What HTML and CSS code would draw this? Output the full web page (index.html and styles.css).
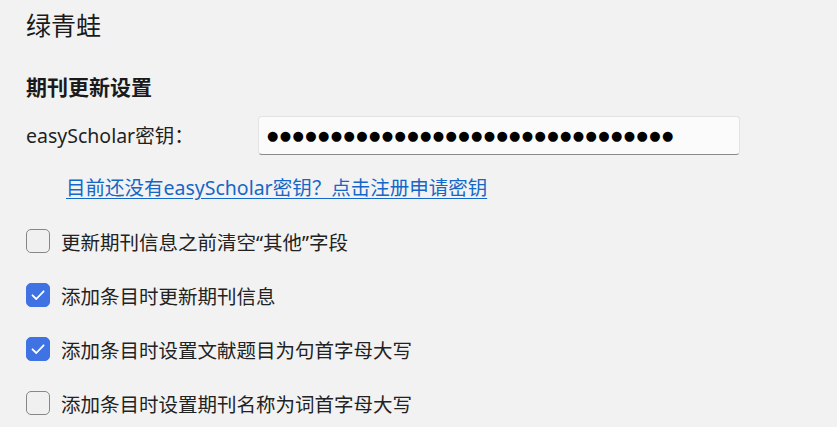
FILE: index.html
```html
<!DOCTYPE html>
<html lang="zh-CN">
<head>
<meta charset="utf-8">
<title>绿青蛙</title>
<link rel="stylesheet" href="styles.css">
</head>
<body>
<div class="page">
  <h1 class="title">绿青蛙</h1>
  <h2 class="section">期刊更新设置</h2>
  <div class="key-row">
    <label class="key-label">easyScholar密钥：</label>
    <div class="key-input"><span class="dots">●●●●●●●●●●●●●●●●●●●●●●●●●●●●●●●●</span></div>
  </div>
  <div class="link-row"><a class="link" href="#">目前还没有easyScholar密钥？点击注册申请密钥</a></div>
  <div class="check-row">
    <span class="box"></span>
    <span class="check-text">更新期刊信息之前清空“其他”字段</span>
  </div>
  <div class="check-row">
    <span class="box checked"><svg viewBox="0 0 24 24" width="24" height="24"><path d="M6.5 12.3 L10.3 16 L17.6 8.3" fill="none" stroke="#fff" stroke-width="1.8" stroke-linecap="round" stroke-linejoin="round"/></svg></span>
    <span class="check-text">添加条目时更新期刊信息</span>
  </div>
  <div class="check-row">
    <span class="box checked"><svg viewBox="0 0 24 24" width="24" height="24"><path d="M6.5 12.3 L10.3 16 L17.6 8.3" fill="none" stroke="#fff" stroke-width="1.8" stroke-linecap="round" stroke-linejoin="round"/></svg></span>
    <span class="check-text">添加条目时设置文献题目为句首字母大写</span>
  </div>
  <div class="check-row">
    <span class="box"></span>
    <span class="check-text">添加条目时设置期刊名称为词首字母大写</span>
  </div>
</div>
</body>
</html>
```

FILE: styles.css
```css
html, body {
  margin: 0;
  padding: 0;
  background: #f2f2f2;
  overflow: hidden;
}
body {
  font-family: "Noto Sans", "Noto Sans CJK SC", sans-serif;
  color: #1f1f1f;
  font-size: 19.5px;
}
.page {
  padding-left: 26px;
}
.title {
  margin: 0;
  height: 50px;
  line-height: 50px;
  font-size: 25px;
  font-weight: 400;
  color: #1a1a1a;
}
.section {
  margin: 20px 0 0 0;
  height: 34px;
  line-height: 34px;
  font-size: 21px;
  font-weight: 700;
  color: #1a1a1a;
}
.key-row {
  margin-top: 12px;
  display: flex;
  align-items: center;
  height: 39px;
}
.key-label {
  width: 232px;
  flex: none;
  line-height: 39px;
}
.key-input {
  box-sizing: border-box;
  width: 482px;
  height: 39px;
  background: #fbfbfb;
  border: 1px solid #e3e3e3;
  border-bottom: 1px solid #8a8a8a;
  border-radius: 4px;
  padding-left: 8px;
  display: flex;
  align-items: center;
  overflow: hidden;
}
.dots {
  font-family: "DejaVu Sans", sans-serif;
  font-size: 13px;
  letter-spacing: 1.4px;
  color: #000;
  line-height: 1;
  white-space: nowrap;
}
.link-row {
  margin-top: 18px;
  height: 30px;
  line-height: 30px;
  padding-left: 40px;
}
.link {
  color: #1467c8;
  text-decoration: underline;
  text-underline-offset: 3px;
}
.check-row {
  display: flex;
  align-items: center;
  height: 54px;
}
.link-row + .check-row {
  margin-top: 11px;
}
.box {
  box-sizing: border-box;
  width: 24px;
  height: 24px;
  border: 1.5px solid #878787;
  border-radius: 5px;
  background: #f0f0f0;
  flex: none;
  display: flex;
  align-items: center;
  justify-content: center;
}
.box.checked {
  background: #3f73e4;
  border-color: #3f73e4;
}
.box svg {
  display: block;
  flex: none;
}
.check-text {
  margin-left: 11px;
  color: #222;
}
```
